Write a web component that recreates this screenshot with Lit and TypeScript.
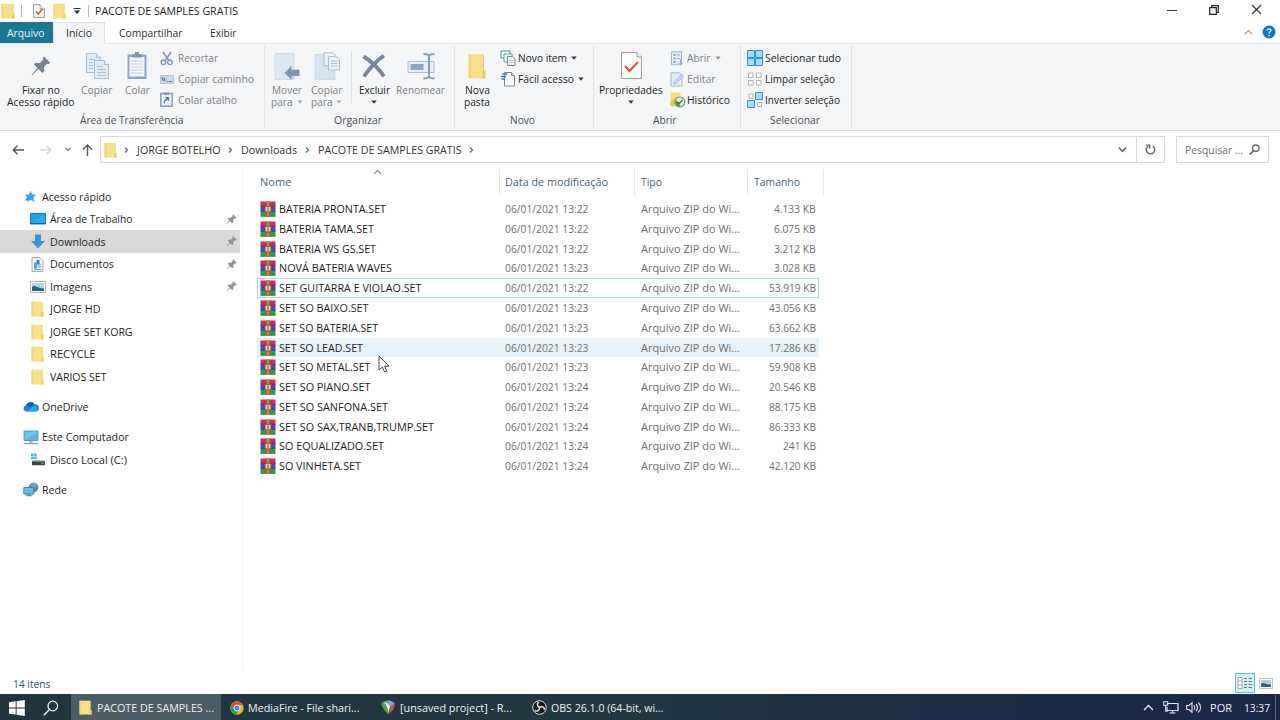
import { LitElement, html, css, svg, nothing } from "lit";
import { customElement, property } from "lit/decorators.js";

/** Single-line label whose glyphs are condensed or widened to a given width. */
@customElement("fit-text")
class FitText extends LitElement {
  @property() text = "";
  @property({ type: Number }) w = 0;
  static styles = css`
    :host { display: block; flex: none; white-space: pre; line-height: var(--line, 16px); height: var(--line, 16px); }
    span { display: inline-block; transform-origin: 0 50%; vertical-align: top; }
  `;
  render() {
    return html`<span>${this.text}</span>`;
  }
  updated() {
    const span = this.renderRoot.querySelector("span") as HTMLElement;
    span.style.transform = "none";
    const natural = span.getBoundingClientRect().width;
    this.style.width = `${this.w}px`;
    if (natural) span.style.transform = `scaleX(${this.w / natural})`;
  }
}

const t = (text: string, w: number, cls = "") => html`<fit-text class=${cls} .text=${text} .w=${w}></fit-text>`;
const icon = (w: number, h: number, body: unknown, cls = "") =>
  html`<svg class="ic ${cls}" width=${w} height=${h} viewBox="0 0 ${w} ${h}">${body}</svg>`;

const folder = (w = 13, h = 16, cls = "") =>
  html`<svg class="ic ${cls}" width=${w} height=${h} viewBox="0 0 13 16" preserveAspectRatio="none">
    <path d="M.5 .8h11v9.200l1 .8v4.700H.5z" fill="#f8e08b" />
    <path d="M.5 .8h1.800v14.700H.5z" fill="#f1d673" /><path d="M10.800 10.500l1.700.4v4.600H9.800z" fill="#eccd5c" />
    <path d="M11.200 1v9.500" stroke="#e8cb6a" stroke-width=".7" />
  </svg>`;

const caret = (color = "#333") => icon(6, 4, svg`<path d="M.3.5h5.400L3 3.700z" fill=${color} />`);
const pinBody = svg`<path d="M11.800.5 17.500 6.200 16 7.300 14.600 6.900 11.700 10 12 13.600 10.300 15.300 6.600 11.700 1 17.300 .6 16.900 5.700 10.700 2.600 7.500 4.200 6 7.900 6.200 11 3.200 10.600 1.700Z"/>`;
const pin = (size: number, color: string, cls = "") =>
  html`<svg class="ic ${cls}" width=${size} height=${size} viewBox="0 0 18 18" fill=${color}>${pinBody}</svg>`;

const page = (w: number, h: number, mark: unknown) =>
  icon(w, h, svg`<path d="M.6.6H${w - 5}L${w - 0.6} 5V${h - 0.6}H.6z" fill="#fff" stroke="#8b8b8b" stroke-width=".9"/>
    <path d="M${w - 5} .6V5h4.400" fill="#eee" stroke="#8b8b8b" stroke-width=".8"/>${mark}`);

const sheets = icon(26, 28, svg`
  <g fill="#e3ebf5" stroke="#a3b6cf" stroke-width=".9">
    <path d="M2.500 1.500h10l4 4v15h-14z"/><path d="M12.500 1.500v4h4" />
    <path d="M10.500 8.500h10l4 4v14h-14z"/><path d="M20.500 8.500v4h4" /></g>
  <path d="M5 7.500h6M5 10.500h4M5 13.500h4M5 16.500h4M13 14.500h6M13 17.500h9M13 20.500h9M13 23.500h9" stroke="#a6bad3" stroke-width=".9"/>`);
const clipboard = icon(22, 29, svg`
  <path d="M1.500 3.500h19v24.500h-19z" fill="#8fa5c3"/><path d="M3.500 6h15v19.500h-15z" fill="#f1f5fa"/>
  <path d="M6.500 3H9V1h4v2h2.500v3.500h-9z" fill="#7f91ab"/>
  <path d="M5 10h12M5 13h12M5 16h12M5 19h12M5 22h12" stroke="#c2cedd" stroke-width=".9"/>`);
const scissors = icon(14, 15, svg`
  <path d="M3 1l5.500 8M11 1L5.500 9" stroke="#8496ae" stroke-width="1.500" fill="none"/>
  <circle cx="3.500" cy="11.300" r="2.300" fill="none" stroke="#7b93b5" stroke-width="1.300"/>
  <circle cx="10" cy="11.300" r="2.300" fill="none" stroke="#7b93b5" stroke-width="1.300"/>`);
const pathIcon = icon(14, 9, svg`<path d="M.5.5h13v8H.5z" fill="#c9d8ea" stroke="#a9bdd7" stroke-width=".8"/>
  <path d="M2 2.500l1.300 3.500M4 2.500l1.300 3.500M7 6.500h1M8.800 6.500h3.400" stroke="#54729c" stroke-width="1.100"/>`);
const shortcutIcon = icon(13, 15, svg`<path d="M.8 1.500h11.400v12.700H.8z" fill="#eef3f9" stroke="#7f98bc" stroke-width="1.400"/>
  <path d="M4 .5h5v2.300H4z" fill="#8397b3"/><path d="M4.300 11.500c-.3-3 1-4 3-4" stroke="#54729c" stroke-width="1.300" fill="none"/><path d="M4.800 5h4.400v4.600z" fill="#54729c"/>`);
const moveTo = icon(26, 28, svg`<path d="M1 1.500h19v26H1z" fill="#dae6f2" stroke="#c6d6e6" stroke-width=".8"/>
  <path d="M17 21l3-4v10h-3z" fill="#c3d4e6"/><path d="M10.500 20.800l7-7v4h8v6.200h-8v3.800z" fill="#7e95b3"/>`);
const copyTo = icon(26, 28, svg`<path d="M1 2.500h20v25H1z" fill="#d5e2f0" stroke="#c6d6e6" stroke-width=".8"/>
  <g fill="#eaf1f8" stroke="#a6b9d2" stroke-width=".9"><path d="M10 .8h9l2 2v11H10z"/><path d="M14.500 4.500h7.500l3.500 3v10.500h-11z"/></g>
  <path d="M16.500 9h7M16.500 11.500h7M16.500 14h7" stroke="#a6bad3" stroke-width=".9"/>`);
const del = icon(26, 26, svg`<path d="M2.500 3.500C10 8 18 16 23 23.500M22.800 2.500C15 8.500 8 16 3 23.500" stroke="#75869d" stroke-width="3.800" fill="none"/>`);
const rename = icon(28, 28, svg`<path d="M1 9.500h26v11H1z" fill="#e6eef7" stroke="#a6bad3"/><path d="M3.500 12h13v6h-13z" fill="#8ea5c4"/>
  <path d="M16.500 2c3 0 5 .5 5.500 2 .5-1.500 2.500-2 5.500-2M22 3.500v21M16.500 26.500c3 0 5-.5 5.500-2 .5 1.500 2.500 2 5.500 2" fill="none" stroke="#8398b4" stroke-width="1.900"/>`);
const newItem = icon(16, 16, svg`<g fill="#fff" stroke-width="1"><path d="M1 1h9v7H1z" stroke="#2f97a8"/><path d="M4 4h8v8H4z" stroke="#5d9aa6"/>
  <path d="M7.500 6.500h5l2.500 2.500v6.500H7.500z" stroke="#7c8790"/></g><path d="M9 10.500h4.500M9 12.500h4.500" stroke="#9ab" stroke-width=".8"/>`);
const easyAccess = icon(16, 16, svg`<path d="M4.500 1.500h7l3 3v10.500h-10z" fill="#fff" stroke="#7f878e"/><path d="M11.500 1.500v3h3" fill="none" stroke="#7f878e" stroke-width=".8"/>
  <path d="M2.500 3h5M1 5.500h5M1.500 8h3" stroke="#2b83bb" stroke-width="1.400"/>`);
const openIc = icon(14, 15, svg`<path d="M1.500.8h10v13h-10z" fill="#e9eff7" stroke="#9fb4cf"/><path d="M3.500 3h2v2h-2zM3.500 6.500h2v2h-2zM3.500 10h2v2h-2z" fill="#7e9cc2"/>
  <path d="M7 4h3M7 7.500h3M10.500 8v5M8 11.500l2.500 2.500 2.500-2.500" stroke="#93abc9" fill="none"/>`);
const editIc = icon(14, 15, svg`<path d="M1 .8h8.500l2.500 2.500V14H1z" fill="#e6eef7" stroke="#a4b8d2"/><path d="M3.500 12l1-3 7.500-6.500 1.500 2L6 11.500z" fill="#c3d5ea" stroke="#9db5d2" stroke-width=".7"/>`);
const history = icon(16, 16, svg`<path d="M.5.500h10v13H.5z" fill="#f7df72"/><path d="M.5 9l4-1v7l-4-1.500z" fill="#e9c94a"/>
  <circle cx="9.800" cy="10" r="5" fill="#dfe9dd" stroke="#7d9c80" stroke-width="1.200"/><path d="M5 8.500a5 5 0 0 0 5.500 6.200L9.500 11.500z" fill="#45a049"/><path d="M6.500 9.500l3 2 3-3.800" fill="none" stroke="#4b5a4c" stroke-width="1.100"/>`);
const selAll = icon(16, 16, svg`<g fill="#a8dcf6" stroke="#2f94d4" stroke-width="1"><path d="M.5.5h7v7h-7zM8.500.5h7v7h-7zM.5 8.500h7v7h-7zM8.500 8.500h7v7h-7z"/></g>`);
const selNone = icon(16, 16, svg`<g fill="#fff" stroke="#a7a7a7" stroke-width=".9"><path d="M1.500 2h4.500v4.500H1.500zM9.500 2H14v4.500H9.500zM1.500 9.500H6V14H1.500zM9.500 9.500H14V14H9.500z"/></g>`);
const selInv = icon(16, 16, svg`<path d="M2 2h4v4H2zM10.500 10.500h4v4h-4z" fill="#fff" stroke="#a7a7a7" stroke-width=".9"/><path d="M8.500.5h7v7h-7zM.5 8.500h7v7h-7z" fill="#a8dcf6" stroke="#2f94d4"/>`);

const rar = icon(16, 16, svg`
  <path d="M.5.5h15v5H.5z" fill="#c5305c"/><path d="M.5 5.500h15v5H.5z" fill="#4a49b4"/><path d="M.5 10.500h15v5H.5z" fill="#379a42"/>
  <path d="M.5 4.800h15v.9H.5z" fill="#6d1c46"/><path d="M.5 9.900h15v.8H.5z" fill="#24356c"/><path d="M.5 14.800h15v.7H.5z" fill="#226b30"/>
  <path d="M6 .5h4v15H6z" fill="#b0602f"/><path d="M7.400.5h1.200v15H7.400z" fill="#d89c57"/>
  <path d="M5 5.300h6v5.600H5z" fill="#e3d3cd" stroke="#8a4636" stroke-width=".9"/><path d="M7.400 6.200h1.200v3.700H7.400z" fill="#97594a"/>`);

const star = icon(13, 13, svg`<path d="M6.500.8l1.700 3.700 4.200.2-3.100 2.800 1.300 4.500-3.800-2.300-3.800 2.400 1-4.400L.7 4.900l4.200-.4z" fill="#38a5e6"/><path d="M.5 11l3-4 1.500 2z" fill="#2285c9"/>`);
const desktop = icon(16, 12, svg`<path d="M.5.500h15v10.500H.5z" fill="#1ea0ee" stroke="#1579bf"/><path d="M1 8.500L15 2v8.500H1z" fill="#36b2f6" opacity=".6"/><path d="M1 10h14v1H1z" fill="#125f9b"/>`);
const down = icon(16, 15, svg`<path d="M5 .5h6v6.500h4L8 14.500 1 7h4z" fill="#3c8fd3"/>`);
const docs = icon(13, 15, svg`<path d="M1 .6h8l3 3v10.800H1z" fill="#f5f9fb" stroke="#8b969e" stroke-width=".8"/><path d="M3 5.500h3v6H3z" fill="#4aa7d6"/><path d="M5.500 3h3v4.500h-3z" fill="#2d81b9"/><path d="M6.500 8h4M6.500 10h4M3 12.500h7.500" stroke="#63a3c5" stroke-width="1"/>`);
const images = icon(16, 12, svg`<path d="M.5.5h15v11H.5z" fill="#fff" stroke="#9aa2a8" stroke-width=".8"/><path d="M2 2h12v8H2z" fill="#aed8f0"/><path d="M2 6c3-3 6 2 12 1.500V10H2z" fill="#2b6378"/>`);
const onedrive = icon(16, 11, svg`<path d="M3.500 10.500A3.200 3.200 0 0 1 3 4.200 4.700 4.700 0 0 1 11.500 3.500 3.500 3.500 0 0 1 13 10.500z" fill="#1a86d8"/><path d="M3 4.200A4.700 4.700 0 0 1 11.500 3.500L7 6.500z" fill="#0c5fae"/><path d="M3.500 10.500l8-5.500a3 3 0 0 1 1.500 5.500z" fill="#2aa6ec"/>`);
const pc = icon(16, 15, svg`<path d="M1 1h14v9.500H1z" fill="#6cc4f0" stroke="#5a8cab" stroke-width=".9"/><path d="M1.500 10L14.500 3v7z" fill="#49aee6" opacity=".7"/><path d="M6 10.800h4v2H6z" fill="#9fb0bb"/><path d="M.5 13h15v1.300H.5z" fill="#93a2ad"/>`);
const disk = icon(16, 13, svg`<path d="M1 .5h2.500V3H1zM4.200.5h2.500V3H4.200zM1 3.600h2.500V6H1zM4.200 3.600h2.500V6H4.200z" fill="#35b5dc"/><path d="M3 7h11l1 1.500H2z" fill="#b7bcc0"/><path d="M2 8.300h13v4H2z" fill="#40484c"/><path d="M11.500 9.800h2v1h-2z" fill="#61d377"/>`);
const network = icon(16, 15, svg`<circle cx="10.500" cy="5.500" r="4.800" fill="#4a87a8"/><path d="M7 3c2-3 6-2 7 .5L11 7z" fill="#76a9bf"/><path d="M.8 5.500h10v6.500H.8z" fill="#62bdf0" stroke="#3b7ea8" stroke-width=".9"/><path d="M4.300 12h3.500v1.200H4.300zM2.500 13.200h7v1h-7z" fill="#5d92b3"/>`);

const chev = (w: number, h: number, d: string, color: string, sw = 1.3) =>
  icon(w, h, svg`<path d=${d} fill="none" stroke=${color} stroke-width=${sw} />`);
const crumb = chev(5, 8, "M1 1.500l2.600 2.500L1 6.500", "#666", 1.200);

type Side = { label: string; w: number; icon: unknown; level?: number; pinned?: boolean; selected?: boolean; gap?: boolean };
const SIDE: Side[] = [
  { label: "Acesso rápido", w: 69.500, icon: star, },
  { label: "Área de Trabalho", w: 82.500, icon: desktop, level: 1, pinned: true },
  { label: "Downloads", w: 55.500, icon: down, level: 1, pinned: true, selected: true },
  { label: "Documentos", w: 64, icon: docs, level: 1, pinned: true },
  { label: "Imagens", w: 42, icon: images, level: 1, pinned: true },
  { label: "JORGE HD", w: 50.500, icon: folder(13, 16), level: 1 },
  { label: "JORGE SET KORG", w: 82.500, icon: folder(13, 16), level: 1 },
  { label: "RECYCLE", w: 45.500, icon: folder(13, 16), level: 1 },
  { label: "VARIOS SET", w: 56.500, icon: folder(13, 16), level: 1 },
  { label: "OneDrive", w: 46.500, icon: onedrive, gap: true },
  { label: "Este Computador", w: 87, icon: pc, gap: true },
  { label: "Disco Local (C:)", w: 77, icon: disk, level: 1 },
  { label: "Rede", w: 25, icon: network, gap: true },
];

type Row = [name: string, width: number, minute: string, size: string, sizeWidth: number];
const ROWS: Row[] = [
  ["BATERIA PRONTA.SET", 107, "22", "4.133 KB", 41.500],
  ["BATERIA TAMA.SET", 95, "22", "6.075 KB", 41.500],
  ["BATERIA WS GS.SET", 97, "22", "3.212 KB", 41.500],
  ["NOVÁ BATERIA WAVES", 113, "23", "3.028 KB", 41.500],
  ["SET GUITARRA E VIOLAO.SET", 142.500, "22", "53.919 KB", 47],
  ["SET SO BAIXO.SET", 89.500, "23", "43.056 KB", 47],
  ["SET SO BATERIA.SET", 99, "23", "63.662 KB", 47],
  ["SET SO LEAD.SET", 84, "23", "17.286 KB", 47],
  ["SET SO METAL.SET", 91.500, "23", "59.908 KB", 47],
  ["SET SO PIANO.SET", 91.500, "24", "20.546 KB", 47],
  ["SET SO SANFONA.SET", 109, "24", "88.175 KB", 47],
  ["SET SO SAX,TRANB,TRUMP.SET", 155, "24", "86.333 KB", 47],
  ["SO EQUALIZADO.SET", 105, "24", "241 KB", 33],
  ["SO VINHETA.SET", 82, "24", "42.120 KB", 47],
];

@customElement("app-root")
class AppRoot extends LitElement {
  static styles = css`
    :host { display: flex; flex-direction: column; width: 1280px; height: 720px; overflow: hidden; background: #fff; position: relative;
      font-family: "Open Sans", "Noto Sans", sans-serif; font-size: 11.250px; color: #1d1d1d; box-sizing: border-box; }
    * { box-sizing: border-box; }
    .ic { display: block; flex: none; }
    .title { height: 22px; display: flex; align-items: center; padding-left: 1px; flex: none; }
    .vsep { width: 1px; height: 12px; background: #b5b5b5; flex: none; }
    .t1 { margin: 0 0 0 6px; } .t2 { margin-left: 11px; } .t3 { margin-left: 8px; } .t4 { margin-left: 7px; } .t5 { margin: 0 6px 0 7px; }
    .caps { margin-left: auto; display: flex; align-items: center; gap: 32px; padding: 0 18.500px 3px 0; }
    .tabs { height: 21px; display: flex; flex: none; align-items: center; color: #2b2b2b; }
    .file { background: #1a7896; color: #e6f3f7; width: 53px; height: 21px; padding: 3px 0 0 7px; }
    .home { background: #f4f5f7; width: 52px; height: 22px; border: 1px solid #e1e2e4; border-bottom: 0; padding: 2px 0 0 12px; margin-bottom: -1px; position: relative; }
    .share { margin-left: 14px; } .view { margin-left: 27px; }
    .help { margin-left: auto; display: flex; align-items: center; gap: 9px; padding: 0 4px 2px 0; }
    .ribbon { height: 88px; flex: none; display: flex; background: #f4f5f7; border-top: 1px solid #e1e2e4; border-bottom: 1px solid #d9dadc; }
    .group { display: flex; flex-direction: column; border-right: 1px solid #e2e3e5; margin: 2px 0 0; height: 82px; flex: none; }
    .g1 { width: 265px; padding-left: 5px; } .g2 { width: 190px; padding-left: 2px; } .g3 { width: 139px; padding-left: 2px; }
    .g4 { width: 147px; padding-left: 1px; } .g5 { width: 111px; padding-left: 6px; }
    .tools { display: flex; height: 67px; }
    .glabel { color: #4d4d4d; padding-top: 1.500px; }
    .l1 { margin-left: 74.500px; } .l2 { margin-left: 67px; } .l3 { margin-left: 53px; } .l4 { margin-left: 58px; } .l5 { margin-left: 23px; }
    .big { display: flex; flex-direction: column; align-items: center; flex: none; --line: 12px; }
    .w72 { width: 72px; } .w40 { width: 40px; } .w39 { width: 39px; } .w53 { width: 53px; }
    .pic { height: 38px; padding-top: 1px; display: flex; align-items: center; justify-content: center; flex: none; }
    .big .below { margin-top: 4px; }
    .line { display: flex; align-items: center; gap: 4px; height: 12px; }
    .dim { color: #7f8183; }
    .isep { width: 1px; height: 52px; background: #dfe0e2; margin: 5px 2px 0 5px; flex: none; }
    .small { display: flex; flex-direction: column; padding-top: 2px; margin-left: 3px; }
    .g5 .small { margin-left: 0; }
    .si { height: 20.800px; display: flex; align-items: center; }
    .si .box { width: 18px; display: flex; align-items: center; flex: none; }
    .g4 .box { width: 17px; }
    .si .ic:last-child:not(.box .ic) { margin-left: 4px; }
    .addr { height: 37px; flex: none; display: flex; align-items: center; padding-left: 12px; color: #333; }
    .a2 { margin-left: 16px; } .a3 { margin-left: 13px; } .a4 { margin-left: 11px; }
    .path { margin-left: 7px; width: 1065px; height: 27px; border: 1px solid #d9d9d9; display: flex; align-items: center; padding-left: 3px; flex: none; }
    .c1 { margin: 0 8px 0 7px; } .c2 { margin: 0 8px 0 7.600px; }
    .pend { margin-left: auto; display: flex; align-items: center; height: 25px; }
    .refresh { border-left: 1px solid #d9d9d9; width: 28px; height: 25px; display: flex; align-items: center; justify-content: center; margin-left: 9px; }
    .search { margin-left: 11px; width: 93px; height: 27px; border: 1px solid #d9d9d9; display: flex; align-items: center; padding-left: 8px; gap: 6px; color: #6d6d6d; }
    .main { flex: 1; display: flex; min-height: 0; }
    .side { width: 243px; flex: none; border-right: 1px solid #f0f0f0; padding-top: 17.300px; margin: 0 0 3px; }
    .row { height: 22.550px; width: 240px; display: flex; align-items: center; padding-left: 22px; }
    .row.sub { padding-left: 29px; } .row.gap { margin-top: 7.500px; } .row.sel { background: #d9d9d9; }
    .slot { width: 20px; flex: none; display: flex; justify-content: center; padding-right: 3px; }
    .row.sub .slot { width: 20.500px; padding-right: 3px; }
    .pin { margin: 0 3px 0 auto; }
    .list { display: flex; flex-direction: column; padding-left: 14px; }
    .head { display: flex; height: 28px; color: #4d5f7b; padding-top: 1px; }
    .hc { height: 26px; border-right: 1px solid #e6e6e6; padding: 5px 0 0 6px; flex: none; }
    .h1 { width: 243px; padding-left: 3px; display: flex; } .h2 { width: 135px; padding-left: 5px; } .h3 { width: 113px; } .h4 { width: 76px; }
    .sort { margin: -5px 0 0 81px; }
    .rows { padding-top: 3.300px; }
    .file-row { height: 19.770px; width: 562px; display: flex; align-items: center; color: #6e6e6e; border: 1px solid transparent; padding: 0 2.500px 0 2px; }
    .file-row.focus { border-color: #a5d5f3; } .file-row.hover { background: #e5f2fb; border-color: #e5f2fb; }
    .name { width: 245px; display: flex; align-items: center; gap: 3px; color: #1d1d1d; flex: none; }
    .date { width: 136px; flex: none; } .size { margin-left: auto; }
    .status { height: 21px; flex: none; display: flex; align-items: center; padding: 0 7px 0 13px; color: #3b4a66; }
    .views { margin-left: auto; display: flex; align-items: center; gap: 4px; padding-bottom: 1px; }
    .vbtn { width: 20px; height: 20px; border: 1px solid #62bfd2; background: #d4eff6; display: flex; align-items: center; justify-content: center; }
    .task { height: 26px; flex: none; display: flex; align-items: center; color: #eef2f4; background: linear-gradient(90deg, #20363f, #213743 50%, #1b2a44 82%, #192845); padding: 1px 0 0 9px; }
    .ts { margin: 0 12px 0 18px; }
    .tb { height: 26px; width: 151px; display: flex; align-items: center; gap: 4px; padding: 1px 0 0 8px; flex: none; margin-top: -1px; }
    .tb.on { background: #4b5d66; width: 150px; gap: 5px; }
    .tb.b2 { padding-left: 9px; } .tb.b3 { padding-left: 9px; gap: 5px; } .tb.b4 { padding-left: 9px; }
    .tray { margin-left: auto; display: flex; align-items: center; height: 26px; }
    .y1 { margin-left: 9px; } .y2 { margin-left: 7px; } .y3 { margin-left: 8px; } .y4 { margin-left: 12px; }
    .peek { width: 1px; height: 26px; background: #56627a; margin: 0 4px 0 5px; }
    .cursor { position: absolute; left: 378px; top: 355px; }
  `;

  big(cls: string, pic: unknown, body: unknown, dim = false) {
    return html`<div class="big ${cls} ${dim ? "dim" : ""}"><div class="pic">${pic}</div>${body}</div>`;
  }
  small(pic: unknown, text: string, w: number, dim = false, arrow = false) {
    return html`<div class="si ${dim ? "dim" : ""}"><div class="box">${pic}</div>${t(text, w)}${arrow ? caret(dim ? "#999" : "#333") : nothing}</div>`;
  }

  render() {
    const check = (w: number, h: number, d: string, sw: number) =>
      page(w, h, svg`<path d=${d} fill="none" stroke="#d95430" stroke-width=${sw}/>`);
    return html`
      <div class="title">
        ${folder(14, 16)}<div class="vsep t1"></div>
        <div class="t2">${check(12, 14, "M3 7.500l2.300 2.500L9.500 5", 1.500)}</div>
        <div class="t3">${folder(13, 16)}</div>
        <div class="t4">${icon(8, 8, svg`<path d="M.5 1.500h7" stroke="#333"/><path d="M.8 3.500h6.400L4 7z" fill="#333"/>`)}</div>
        <div class="vsep t5"></div>
        ${t("PACOTE DE SAMPLES GRATIS", 143)}
        <div class="caps">
          ${icon(10, 10, svg`<path d="M0 5.500h10" stroke="#333"/>`)}
          ${icon(10, 10, svg`<path d="M.7 2.700h6.600v6.600H.7z M2.700 2.500V.7h6.600v6.600H7.500" fill="none" stroke="#222" stroke-width="1.200"/>`)}
          ${icon(11, 11, svg`<path d="M1 1l9 9M10 1l-9 9" stroke="#333" stroke-width="1.200"/>`)}
        </div>
      </div>
      <div class="tabs">
        <div class="file">${t("Arquivo", 37.500)}</div>
        <div class="home">${t("Início", 26)}</div>
        ${t("Compartilhar", 63.500, "share")}${t("Exibir", 26.500, "view")}
        <div class="help">
          ${chev(9, 6, "M1 5l3.500-3.500L8 5", "#999", 1.100)}
          ${icon(14, 14, svg`<circle cx="7" cy="7" r="6.500" fill="#0f76c9"/><path d="M5.200 5.600c0-2.400 3.700-2.300 3.700-.2 0 1.400-1.800 1.500-1.800 3M7.100 9.700v1.300" stroke="#fff" stroke-width="1.300" fill="none"/>`)}
        </div>
      </div>
      <div class="ribbon">
        <div class="group g1">
          <div class="tools">
            ${this.big("w72", pin(20, "#7b858f"), html`${t("Fixar no", 38)}${t("Acesso rápido", 67.500)}`)}
            ${this.big("w40", sheets, t("Copiar", 31.500), true)}
            ${this.big("w40", clipboard, t("Colar", 25), true)}
            <div class="small">
              ${this.small(scissors, "Recortar", 40, true)}${this.small(pathIcon, "Copiar caminho", 76, true)}${this.small(shortcutIcon, "Colar atalho", 59, true)}
            </div>
          </div>
          <div class="glabel">${t("Área de Transferência", 103.500, "l1")}</div>
        </div>
        <div class="group g2">
          <div class="tools">
            ${this.big("w40", moveTo, html`${t("Mover", 30)}<div class="line">${t("para", 21.500)}${caret("#aaa")}</div>`, true)}
            ${this.big("w39", copyTo, html`${t("Copiar", 31.500)}<div class="line">${t("para", 21.500)}${caret("#aaa")}</div>`, true)}
            <div class="isep"></div>
            ${this.big("w40", del, html`${t("Excluir", 31)}<div class="below">${caret()}</div>`)}
            ${this.big("w53", rename, t("Renomear", 49), true)}
          </div>
          <div class="glabel">${t("Organizar", 48, "l2")}</div>
        </div>
        <div class="group g3">
          <div class="tools">
            ${this.big("w40", folder(18, 26), html`${t("Nova", 25)}${t("pasta", 26)}`)}
            <div class="small">${this.small(newItem, "Novo item", 49, false, true)}${this.small(easyAccess, "Fácil acesso", 56, false, true)}</div>
          </div>
          <div class="glabel">${t("Novo", 25, "l3")}</div>
        </div>
        <div class="group g4">
          <div class="tools">
            ${this.big("w72", check(21, 27, "M4 14l4.500 5L17 10", 2.200), html`${t("Propriedades", 63.500)}<div class="below">${caret()}</div>`)}
            <div class="small">${this.small(openIc, "Abrir", 23.500, true, true)}${this.small(editIc, "Editar", 28.500, true)}${this.small(history, "Histórico", 43)}</div>
          </div>
          <div class="glabel">${t("Abrir", 23.500, "l4")}</div>
        </div>
        <div class="group g5">
          <div class="tools">
            <div class="small">${this.small(selAll, "Selecionar tudo", 76)}${this.small(selNone, "Limpar seleção", 70)}${this.small(selInv, "Inverter seleção", 75)}</div>
          </div>
          <div class="glabel">${t("Selecionar", 50, "l5")}</div>
        </div>
      </div>
      <div class="addr">
        ${chev(12, 10, "M5.500.8L1.200 5l4.300 4.200M1.200 5H12", "#555", 1.400)}
        <div class="a2">${chev(12, 10, "M6.500.8L10.800 5 6.500 9.200M10.800 5H0", "#d5d5d5", 1.400)}</div>
        <div class="a3">${chev(6, 5, "M.5 1l2.500 2.500L5.500 1", "#777", 1.200)}</div>
        <div class="a4">${chev(11, 12, "M1 5.500L5.500 1 10 5.500M5.500 1v11", "#555", 1.400)}</div>
        <div class="path">
          ${folder(13, 16)}<div class="c1">${crumb}</div>${t("JORGE BOTELHO", 83.500)}<div class="c2">${crumb}</div>
          ${t("Downloads", 56)}<div class="c2">${crumb}</div>${t("PACOTE DE SAMPLES GRATIS", 143.500)}<div class="c2">${crumb}</div>
          <div class="pend">${chev(9, 7, "M.8 1.500l3.700 3.800 3.700-3.800", "#666", 1.600)}
            <div class="refresh">${icon(11, 11, svg`<path d="M3.200 2.200A4.200 4.200 0 1 0 7.800 2.200" fill="none" stroke="#666" stroke-width="1.400"/><path d="M1 1.200h3.700v3.600" fill="none" stroke="#666" stroke-width="1.300"/>`)}</div>
          </div>
        </div>
        <div class="search">${t("Pesquisar ...", 58)}${icon(11, 11, svg`<circle cx="6.800" cy="4.200" r="3.200" fill="none" stroke="#666" stroke-width="1.300"/><path d="M4.600 6.500L.7 10.400" stroke="#666" stroke-width="1.600"/>`)}</div>
      </div>
      <div class="main">
        <div class="side">
          ${SIDE.map((s) => html`<div class="row ${s.level ? "sub" : ""} ${s.gap ? "gap" : ""} ${s.selected ? "sel" : ""}">
            <div class="slot">${s.icon}</div>${t(s.label, s.w)}${s.pinned ? pin(11, "#8b9299", "pin") : nothing}
          </div>`)}
        </div>
        <div class="list">
          <div class="head">
            <div class="hc h1">${t("Nome", 31.500)}<div class="sort">${chev(9, 6, "M1 5l3.500-3.500L8 5", "#888", 1.100)}</div></div>
            <div class="hc h2">${t("Data de modificação", 103)}</div>
            <div class="hc h3">${t("Tipo", 21)}</div>
            <div class="hc h4">${t("Tamanho", 46)}</div>
          </div>
          <div class="rows">
            ${ROWS.map(([name, w, min, size, sw], i) => html`<div class="file-row ${i === 4 ? "focus" : i === 7 ? "hover" : ""}">
              <div class="name">${rar}${t(name, w)}</div>
              <div class="date">${t(`06/01/2021 13:${min}`, 83.500)}</div>${t("Arquivo ZIP do Wi...", 99)}${t(size, sw, "size")}
            </div>`)}
          </div>
        </div>
      </div>
      <div class="status">
        ${t("14 itens", 37.500)}
        <div class="views">
          <div class="vbtn">${icon(16, 14, svg`<path d="M1 1.500h4v11H1zM1 5h4M1 9h4" fill="#fff" stroke="#8a9aa0" stroke-width=".8"/><path d="M7 2.500h3M11.500 2.500h3.500M7 5.500h3M11.500 5.500h3.500M7 8.500h3M11.500 8.500h3.500M7 11.500h3M11.500 11.500h3.500" stroke="#6d7d84" stroke-width="1"/>`)}</div>
          ${icon(14, 11, svg`<path d="M.5.5h13v10H.5z" fill="#fff" stroke="#a9b0b5" stroke-width=".8"/><path d="M2 2h10v7H2z" fill="#a9cfe8"/><path d="M2 5.500c3-2 5 1.500 10 1V9H2z" fill="#2d6577"/>`)}
        </div>
      </div>
      <div class="task">
        ${icon(16, 16, svg`<path d="M0 2.300L6.700 1.300v6.200H0zM7.600 1.200L15.800 0v7.500H7.600zM0 8.400h6.700v6.200L0 13.700zM7.600 8.400h8.200V16l-8.200-1.200z" fill="#fff"/>`)}
        <div class="ts">${icon(16, 16, svg`<circle cx="9.800" cy="6" r="4.800" fill="none" stroke="#eef2f4" stroke-width="1.300"/><path d="M6.400 9.500L.8 15.200" stroke="#eef2f4" stroke-width="1.400"/>`)}</div>
        <div class="tb on">${folder(13, 15)}${t("PACOTE DE SAMPLES ...", 117)}</div>
        <div class="tb b2">${icon(14, 14, svg`<circle cx="7" cy="7" r="6.700" fill="#e5b92c"/><path d="M1.200 3.700A6.700 6.700 0 0 1 12.900 4H7a3 3 0 0 0-2.800 4z" fill="#dc4a3c"/><path d="M1.200 3.700l3.200 5A3 3 0 0 0 8.300 9.800L6.700 13.700A6.700 6.700 0 0 1 1.200 3.700z" fill="#2f9e50"/><circle cx="7" cy="7" r="3" fill="#4a86e0" stroke="#fff" stroke-width=".9"/>`)}${t("MediaFire - File shari...", 111.500)}</div>
        <div class="tb b3">${icon(14, 15, svg`<path d="M.3 3.500C2 1 5 .3 7.500.6L9 6 7 14.500C5 12 1 8 .3 3.500z" fill="#4da556"/><path d="M7 .6C10 .4 13 2 13.800 4L9.500 7 6 3z" fill="#7ca9cf"/><path d="M13.800 4c.3 4-3 8-6.800 10.500L9.500 6.500z" fill="#c55250"/><path d="M3 2.500c3-.5 5 2 6 4.500L7.300 13c0-4-1.300-8-4.300-10.500z" fill="#f1f1ee"/>`)}${t("[unsaved project] - R...", 112)}</div>
        <div class="tb b4">${icon(15, 15, svg`<circle cx="7.500" cy="7.500" r="6.800" fill="#15181a" stroke="#d9dcdd" stroke-width="1"/><path d="M7.500 7.500C4.500 6 5 3 7 2M7.500 7.500c3-1.800 5.300.3 5 2.500M7.500 7.500c.2 3.300-2.800 4.300-4.800 3" fill="none" stroke="#d5d8d9" stroke-width="1.500"/>`)}${t("OBS 26.1.0 (64-bit, wi...", 112.500)}</div>
        <div class="tray">
          ${chev(11, 7, "M1 6l4.500-4.500L10 6", "#e6eaf0", 1.300)}
          <div class="y1">${icon(16, 13, svg`<path d="M5 2.500h10v7H4V6M9.500 9.500v2.500M6.500 12h6" fill="none" stroke="#e6eaf0" stroke-width="1.200"/><path d="M.7.7h4v3.600h-4zM2.700 4.300v6h2" fill="none" stroke="#e6eaf0" stroke-width="1.100"/>`)}</div>
          <div class="y2">${icon(16, 13, svg`<path d="M.7 4.500H3L6 1.700v9.600L3 8.500H.7z" fill="none" stroke="#e6eaf0" stroke-width="1.100"/><path d="M8 4.500c1 1 1 3 0 4M10 3c2 2 2 5 0 7M12.300 1.500c2.900 3 2.900 7 0 10" fill="none" stroke="#e6eaf0" stroke-width="1.100"/>`)}</div>
          <div class="y3">${t("POR", 22)}</div><div class="y4">${t("13:37", 26)}</div>
          <div class="peek"></div>
        </div>
      </div>
      <svg class="cursor" width="12" height="19" viewBox="0 0 12 19"><path d="M1 1v14l3.300-3 2.200 5 2.300-1-2.200-4.800H11z" fill="#fff" stroke="#333" stroke-width=".9"/></svg>
    `;
  }
}
